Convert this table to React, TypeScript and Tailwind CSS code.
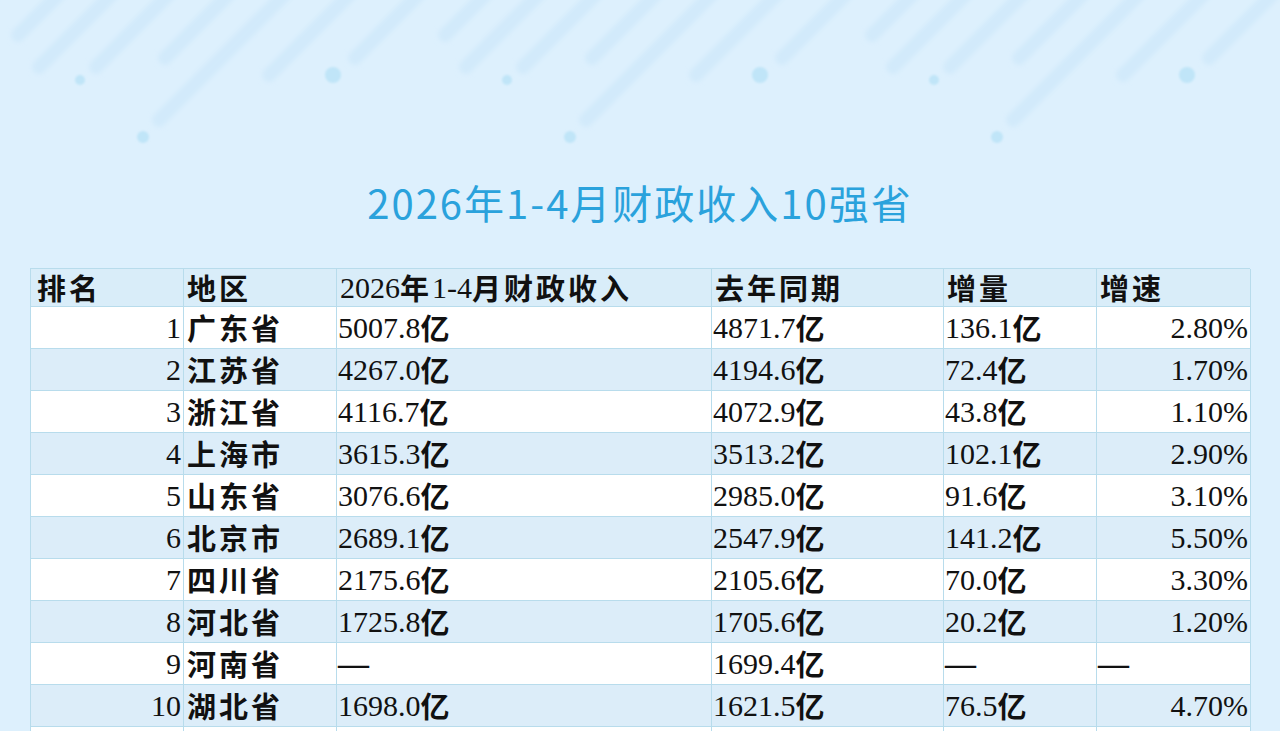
import React from "react";

const rows: [string, string, string, string, string, string][] = [
  ["1", "广东省", "5007.8亿", "4871.7亿", "136.1亿", "2.80%"],
  ["2", "江苏省", "4267.0亿", "4194.6亿", "72.4亿", "1.70%"],
  ["3", "浙江省", "4116.7亿", "4072.9亿", "43.8亿", "1.10%"],
  ["4", "上海市", "3615.3亿", "3513.2亿", "102.1亿", "2.90%"],
  ["5", "山东省", "3076.6亿", "2985.0亿", "91.6亿", "3.10%"],
  ["6", "北京市", "2689.1亿", "2547.9亿", "141.2亿", "5.50%"],
  ["7", "四川省", "2175.6亿", "2105.6亿", "70.0亿", "3.30%"],
  ["8", "河北省", "1725.8亿", "1705.6亿", "20.2亿", "1.20%"],
  ["9", "河南省", "—", "1699.4亿", "—", "—"],
  ["10", "湖北省", "1698.0亿", "1621.5亿", "76.5亿", "4.70%"],
];

function Mixed({ text }: { text: string }) {
  if (text === "—") {
    return <span className="font-['Liberation_Serif',serif] text-[31px] font-bold">—</span>;
  }
  const parts = text.split(/([\u4e00-\u9fff]+)/).filter((p) => p.length > 0);
  return (
    <>
      {parts.map((p, i) =>
        /[\u4e00-\u9fff]/.test(p) ? (
          <span
            key={i}
            className="font-bold tracking-[3px] text-[29px] font-['Noto_Sans_CJK_SC',sans-serif]"
          >
            {p}
          </span>
        ) : (
          <span key={i}>{p}</span>
        )
      )}
    </>
  );
}

const streaks: [number, number][] = [
  [18, 35],
  [39, 67],
  [96, 67],
  [165, 58],
  [159, 120],
  [269, 75],
  [355, 58],
];
const dots: [number, number, number][] = [
  [80, 80, 5],
  [143, 137, 6],
  [333, 75, 8],
];

function Background() {
  return (
    <svg
      className="absolute left-0 top-0 pointer-events-none"
      width="1280"
      height="170"
      viewBox="0 0 1280 170"
    >
      <defs>
        <filter id="blur" x="-20%" y="-20%" width="140%" height="140%">
          <feGaussianBlur stdDeviation="2.4" />
        </filter>
        <filter id="blur2" x="-50%" y="-50%" width="200%" height="200%">
          <feGaussianBlur stdDeviation="1" />
        </filter>
      </defs>
      {[-1, 0, 1, 2, 3].map((k) => (
        <g key={k} transform={`translate(${k * 427} 0)`}>
          <g filter="url(#blur)">
            {streaks.map(([x, y], i) => (
              <line
                key={i}
                x1={x}
                y1={y}
                x2={x + y + 20}
                y2={-20}
                stroke="#d2eafb"
                strokeWidth="14"
                strokeLinecap="round"
              />
            ))}
          </g>
          <g filter="url(#blur2)">
            {dots.map(([x, y, r], i) => (
              <circle key={i} cx={x} cy={y} r={r} fill="#c0e5f8" />
            ))}
          </g>
        </g>
      ))}
    </svg>
  );
}

const cols = "grid-cols-[153px_153px_375px_232px_153px_154px]";

export default function App() {
  return (
    <div className="relative w-[1280px] h-[731px] overflow-hidden bg-[#ddf0fd]">
      <Background />
      <div className="relative flex flex-col items-center">
        <h1 className="mt-[178px] h-[48px] leading-[48px] text-[40px] font-normal tracking-[2px] text-[#2aa2dc] font-['Noto_Sans_CJK_SC',sans-serif]">
          2026年1-4月财政收入10强省
        </h1>
        <div className="mt-[42px] w-[1220px] border-l border-t border-[#b8dcec] text-[30px] text-[#111] font-['Liberation_Serif',serif]">
          <div className={`grid ${cols} h-[38px] bg-[#d9edf9]`}>
            {["排名", "地区", "2026年1-4月财政收入", "去年同期", "增量", "增速"].map((h, i) => (
              <div
                key={i}
                className={`border-r border-b border-[#b8dcec] ${
                  i === 0 ? "pl-[6px]" : "pl-[3px]"
                } flex items-center leading-none whitespace-nowrap`}
              >
                <Mixed text={h} />
              </div>
            ))}
          </div>
          {rows.map((r, ri) => (
            <div
              key={ri}
              className={`grid ${cols} h-[42px] ${ri % 2 === 0 ? "bg-white" : "bg-[#dcedf9]"}`}
            >
              {r.map((c, ci) => (
                <div
                  key={ci}
                  className={`border-r border-b border-[#b8dcec] flex items-center leading-none whitespace-nowrap ${
                    ci === 0 || (ci === 5 && c !== "—")
                      ? "justify-end pr-[2px]"
                      : ci === 1
                      ? "pl-[3px]"
                      : "pl-[1px]"
                  }`}
                >
                  <Mixed text={c} />
                </div>
              ))}
            </div>
          ))}
          <div className={`grid ${cols} h-[42px] bg-white`}>
            {[0, 1, 2, 3, 4, 5].map((i) => (
              <div key={i} className="border-r border-[#b8dcec]" />
            ))}
          </div>
        </div>
      </div>
    </div>
  );
}
